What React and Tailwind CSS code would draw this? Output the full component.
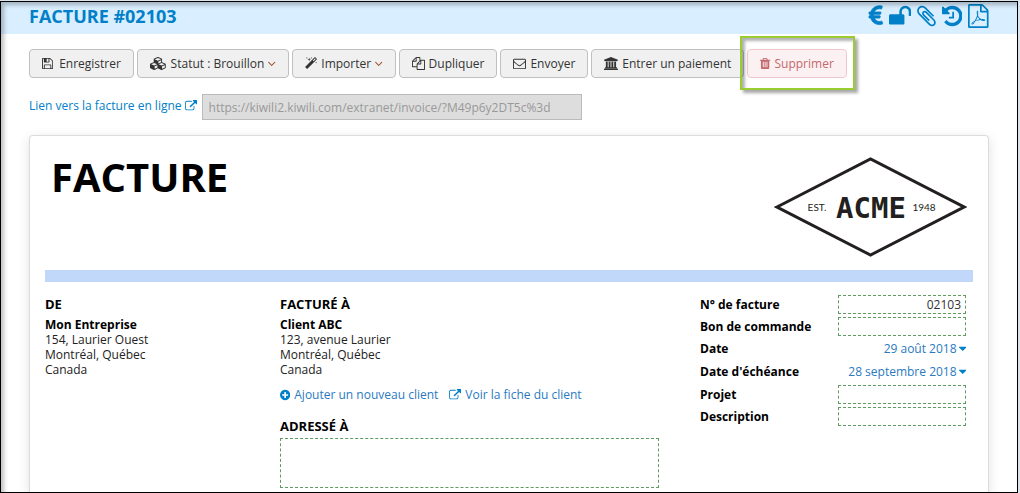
import React, { useState } from "react";

// x offset, width and path of each icon, on a 1792 high grid
const icons = {
  save: [128, 1536, "M512 1536h768v-384h-768v384zm896 0h128v-896q0-14-10-38.5t-20-34.5l-281-281q-10-10-34-20t-39-10v416q0 40-28 68t-68 28h-576q-40 0-68-28t-28-68v-416h-128v1280h128v-416q0-40 28-68t68-28h832q40 0 68 28t28 68v416zm-384-928v-320q0-13-9.5-22.5t-22.5-9.5h-192q-13 0-22.5 9.5t-9.5 22.5v320q0 13 9.5 22.5t22.5 9.5h192q13 0 22.5-9.5t9.5-22.5zm640 32v928q0 40-28 68t-68 28h-1344q-40 0-68-28t-28-68v-1344q0-40 28-68t68-28h928q40 0 88 20t76 48l280 280q28 28 48 76t20 88z"],
  cubes: [0, 2304, "M640 1632l384-192v-314l-384 164v342zm-64-454l404-173-404-173-404 173zm1088 454l384-192v-314l-384 164v342zm-64-454l404-173-404-173-404 173zm-448-293l384-165v-266l-384 164v267zm-64-379l441-189-441-189-441 189zm1088 518v416q0 36-19 67t-52 47l-448 224q-25 14-57 14t-57-14l-448-224q-5-2-7-4-2 2-7 4l-448 224q-25 14-57 14t-57-14l-448-224q-33-16-52-47t-19-67v-416q0-38 21.5-70t56.5-48l434-186v-400q0-38 21.5-70t56.5-48l448-192q23-10 50-10t50 10l448 192q35 16 56.5 48t21.5 70v400l434 186q36 16 57 48t21 70z"],
  magic: [64, 1728, "M1254 581l293-293-107-107-293 293zm447-293q0 27-18 45l-1286 1286q-18 18-45 18t-45-18l-198-198q-18-18-18-45t18-45l1286-1286q18-18 45-18t45 18l198 198q18 18 18 45zm-1351-190l98 30-98 30-30 98-30-98-98-30 98-30 30-98zm350 162l196 60-196 60-60 196-60-196-196-60 196-60 60-196zm930 478l98 30-98 30-30 98-30-98-98-30 98-30 30-98zm-640-640l98 30-98 30-30 98-30-98-98-30 98-30 30-98z"],
  copy: [0, 1792, "M1696 384q40 0 68 28t28 68v1216q0 40-28 68t-68 28h-960q-40 0-68-28t-28-68v-288h-544q-40 0-68-28t-28-68v-672q0-40 20-88t48-76l408-408q28-28 76-48t88-20h416q40 0 68 28t28 68v328q68-40 128-40h416zm-544 213l-299 299h299v-299zm-640-384l-299 299h299v-299zm196 647l316-316v-416h-384v416q0 40-28 68t-68 28h-416v640h512v-256q0-40 20-88t48-76zm956 804v-1152h-384v416q0 40-28 68t-68 28h-416v640h896z"],
  envelope: [0, 1792, "M1664 1504v-768q-32 36-69 66-268 206-426 338-51 43-83 67t-86.5 48.5-102.5 24.5h-2q-48 0-102.5-24.5t-86.5-48.5-83-67q-158-132-426-338-37-30-69-66v768q0 13 9.5 22.5t22.5 9.5h1472q13 0 22.5-9.5t9.5-22.5zm0-1051v-24.5l-.5-13-3-12.5-5.5-9-9-7.5-14-2.5h-1472q-13 0-22.5 9.5t-9.5 22.5q0 168 147 284 193 152 401 317 6 5 35 29.5t46 37.5 44.5 31.5 50.5 27.5 43 9h2q20 0 43-9t50.5-27.5 44.5-31.5 46-37.5 35-29.5q208-165 401-317 54-43 100.5-115.5t46.5-131.5zm128-37v1088q0 66-47 113t-113 47h-1472q-66 0-113-47t-47-113v-1088q0-66 47-113t113-47h1472q66 0 113 47t47 113z"],
  bank: [0, 1920, "M960 0l960 384v128h-128q0 26-20.5 45t-48.5 19h-1526q-28 0-48.5-19t-20.5-45h-128v-128zm-704 640h256v768h128v-768h256v768h128v-768h256v768h128v-768h256v768h59q28 0 48.5 19t20.5 45v64h-1664v-64q0-26 20.5-45t48.5-19h59v-768zm1595 960q28 0 48.5 19t20.5 45v128h-1920v-128q0-26 20.5-45t48.5-19h1782z"],
  trash: [192, 1408, "M704 1376v-704q0-14-9-23t-23-9h-64q-14 0-23 9t-9 23v704q0 14 9 23t23 9h64q14 0 23-9t9-23zm256 0v-704q0-14-9-23t-23-9h-64q-14 0-23 9t-9 23v704q0 14 9 23t23 9h64q14 0 23-9t9-23zm256 0v-704q0-14-9-23t-23-9h-64q-14 0-23 9t-9 23v704q0 14 9 23t23 9h64q14 0 23-9t9-23zm-544-992h448l-48-117q-7-9-17-11h-317q-10 2-17 11zm928 32v64q0 14-9 23t-23 9h-96v948q0 83-47 143.5t-113 60.5h-832q-66 0-113-58.5t-47-141.5v-952h-96q-14 0-23-9t-9-23v-64q0-14 9-23t23-9h309l70-167q15-37 54-63t79-26h320q40 0 79 26t54 63l70 167h309q14 0 23 9t9 23z"],
  external: [0, 1792, "M1408 928v320q0 119-84.5 203.5t-203.5 84.5h-832q-119 0-203.5-84.5t-84.5-203.5v-832q0-119 84.5-203.5t203.5-84.5h704q14 0 23 9t9 23v64q0 14-9 23t-23 9h-704q-66 0-113 47t-47 113v832q0 66 47 113t113 47h832q66 0 113-47t47-113v-320q0-14 9-23t23-9h64q14 0 23 9t9 23zm384-864v512q0 26-19 45t-45 19-45-19l-176-176-652 652q-10 10-23 10t-23-10l-114-114q-10-10-10-23t10-23l652-652-176-176q-19-19-19-45t19-45 45-19h512q26 0 45 19t19 45z"],
  plus: [128, 1536, "M1344 960v-128q0-26-19-45t-45-19h-256v-256q0-26-19-45t-45-19h-128q-26 0-45 19t-19 45v256h-256q-26 0-45 19t-19 45v128q0 26 19 45t45 19h256v256q0 26 19 45t45 19h128q26 0 45-19t19-45v-256h256q26 0 45-19t19-45zm320-64q0 209-103 385.5t-279.5 279.5-385.5 103-385.5-103-279.5-279.5-103-385.5 103-385.5 279.5-279.5 385.5-103 385.5 103 279.5 279.5 103 385.5z"],
  angle: [384, 1024, "M1395 736q0 13-10 23l-466 466q-10 10-23 10t-23-10l-466-466q-10-10-10-23t10-23l50-50q10-10 23-10t23 10l393 393 393-393q10-10 23-10t23 10l50 50q10 10 10 23z"],
  caret: [384, 1024, "M1408 704q0 26-19 45l-448 448q-19 19-45 19t-45-19l-448-448q-19-19-19-45t19-45 45-19h896q26 0 45 19t19 45z"],
  euro: [384, 1024, "M1360 1307l35 159q3 12-3 22.5t-17 14.5l-5 1q-4 2-10.5 3.5t-16 4.5-21.5 5.5-25.5 5-30 5-33.5 4.5-36.5 3-38.5 1q-234 0-409-130.5t-238-351.5h-95q-13 0-22.5-9.5t-9.5-22.5v-113q0-13 9.5-22.5t22.5-9.5h66q-2-57 1-105h-67q-14 0-23-9t-9-23v-114q0-14 9-23t23-9h98q67-210 243.5-338t400.5-128q102 0 194 23 11 3 20 15 6 11 3 24l-43 159q-3 13-14 19.5t-24 2.5l-4-1q-4-1-11.5-2.5l-17.5-3.5-22.5-3.5-26-3-29-2.5-29.5-1q-126 0-226 64t-150 176h468q16 0 25 12 10 12 7 26l-24 114q-5 26-32 26h-488q-3 37 0 105h459q15 0 25 12 9 12 6 27l-24 112q-2 11-11 18.5t-20 7.5h-387q48 117 149.5 185.5t228.5 68.5q18 0 36-1.5t33.5-3.5 29.5-4.5 24.5-5 18.5-4.5l12-3 5-2q13-5 26 2 12 7 15 21z"],
  unlock: [64, 1664, "M1728 576v256q0 26-19 45t-45 19h-64q-26 0-45-19t-19-45v-256q0-106-75-181t-181-75-181 75-75 181v192h96q40 0 68 28t28 68v576q0 40-28 68t-68 28h-960q-40 0-68-28t-28-68v-576q0-40 28-68t68-28h672v-192q0-185 131.5-316.5t316.5-131.5 316.5 131.5 131.5 316.5z"],
  clip: [192, 1408, "M1596 1385q0 117-79 196t-196 79q-135 0-235-100l-777-776q-113-115-113-271 0-159 110-270t269-111q158 0 273 113l605 606q10 10 10 22 0 16-30.5 46.5t-46.5 30.5q-13 0-23-10l-606-607q-79-77-181-77-106 0-179 75t-73 181q0 105 76 181l776 777q63 63 145 63 64 0 106-42t42-106q0-82-63-145l-581-581q-26-24-60-24-29 0-48 19t-19 48q0 32 25 59l410 410q10 10 10 22 0 16-31 47t-47 31q-12 0-22-10l-410-410q-63-61-63-149 0-82 57-139t139-57q88 0 149 63l581 581q100 98 100 235z"],
  history: [128, 1536, "M1664 896q0 156-61 298t-164 245-245 164-298 61q-172 0-327-72.5t-264-204.5q-7-10-6.5-22.5t8.5-20.5l137-138q10-9 25-9 16 2 23 12 73 95 179 147t225 52q104 0 198.5-40.5t163.5-109.5 109.5-163.5 40.5-198.5-40.5-198.5-109.5-163.5-163.5-109.5-198.5-40.5q-98 0-188 35.5t-160 101.5l137 138q31 30 14 69-17 40-59 40h-448q-26 0-45-19t-19-45v-448q0-42 40-59 39-17 69 14l130 129q107-101 244.5-156.5t284.5-55.5q156 0 298 61t245 164 164 245 61 298zm-640-288v448q0 14-9 23t-23 9h-320q-14 0-23-9t-9-23v-64q0-14 9-23t23-9h224v-352q0-14 9-23t23-9h64q14 0 23 9t9 23z"],
  pdf: [128, 1536, "M1596 380q28 28 48 76t20 88v1152q0 40-28 68t-68 28h-1344q-40 0-68-28t-28-68v-1600q0-40 28-68t68-28h896q40 0 88 20t76 48zm-444-244v376h376q-10-29-22-41l-313-313q-12-12-41-22zm384 1528v-1024h-416q-40 0-68-28t-28-68v-416h-768v1536h1280zm-514-593q33 26 84 56 59-7 117-7 147 0 177 49 16 22 2 52 0 1-1 2l-2 2v1q-6 38-71 38-48 0-115-20t-130-53q-221 24-392 83-153 262-242 262-15 0-28-7l-24-12q-1-1-6-5-10-10-6-36 9-40 56-91.5t132-96.5q14-9 23 6 2 2 2 4 52-85 107-197 68-136 104-262-24-82-30.5-159.5t6.5-127.5q11-40 42-40h22q23 0 35 15 18 21 9 68-2 6-4 8 1 3 1 8v30q-2 123-14 192 55 164 146 238zm-576 411q52-24 137-158-51 40-87.5 84t-49.5 74zm398-920q-15 42-2 132 1-7 7-44 0-3 7-43 1-4 4-8-1-1-1-2t-1-2q-1-22-13-36 0 1-1 2v2zm-124 661q135-54 284-81-2-1-13-9.5t-16-13.5q-76-67-127-176-27 86-83 197-30 56-45 83zm646-16q-24-24-140-24 76 28 124 28 14 0 18-1 0-1-2-3z"],
};

const Icon = ({ name, className = "h-3" }) => {
  const [x, width, path] = icons[name];
  return (
    <svg className={`w-auto shrink-0 ${className}`} viewBox={`${x} 0 ${width} 1792`} fill="currentColor" aria-hidden="true">
      <path d={path} />
    </svg>
  );
};

const actions = [
  { icon: "save", label: "Enregistrer", gap: "gap-[6px]" },
  { icon: "cubes", label: "Statut : Brouillon", gap: "gap-1", menu: true },
  { icon: "magic", label: "Importer", gap: "gap-1", menu: true },
  { icon: "copy", label: "Dupliquer", gap: "gap-1" },
  { icon: "envelope", label: "Envoyer", gap: "gap-1" },
  { icon: "bank", label: "Entrer un paiement", gap: "gap-1" },
];

const tools = [
  { icon: "euro", label: "Devise", size: "h-6 overflow-visible stroke-current stroke-[60]" },
  { icon: "unlock", label: "Verrouiller", size: "h-6" },
  { icon: "clip", label: "Pièces jointes", size: "h-6" },
  { icon: "history", label: "Historique", size: "h-6" },
  { icon: "pdf", label: "PDF", size: "h-6" },
];

const Header = () => (
  <header className="flex h-8 items-center justify-between bg-[#d9eeff] px-7 pb-1 text-[#0080c8]">
    <h1 className="text-lg font-bold">FACTURE #02103</h1>
    <div className="flex items-center gap-[6px]">
      {tools.map((tool) => (
        <button key={tool.icon} type="button" aria-label={tool.label}>
          <Icon name={tool.icon} className={tool.size} />
        </button>
      ))}
    </div>
  </header>
);

const Toolbar = () => (
  <div className="flex gap-[3px]">
    {actions.map((action) => (
      <button
        key={action.label}
        type="button"
        className={`flex h-[29px] items-center rounded border border-[#c0c0c0] bg-[#f0f0f0] px-3 whitespace-nowrap text-[#333] ${action.gap}`}
      >
        <Icon name={action.icon} className="h-[13px]" />
        {action.label}
        {action.menu && <Icon name="angle" className="h-[13px] text-[#a0522d]" />}
      </button>
    ))}
    <div className="relative">
      <button
        type="button"
        className="flex h-[29px] items-center gap-1 rounded border border-[#f0c8cc] bg-[#fbf1f2] px-3 text-[#c4686e]"
      >
        <Icon name="trash" className="h-[13px]" />
        Supprimer
      </button>
      <div className="pointer-events-none absolute -top-[13px] -right-2 -bottom-3 -left-[7px] border-2 border-[#9acd32] shadow-[3px_3px_3px_rgba(0,0,0,0.35),inset_3px_3px_3px_rgba(0,0,0,0.3)]" />
    </div>
  </div>
);

const Logo = () => (
  <svg className="h-[100px] w-[193px]" viewBox="0 0 193 100" role="img" aria-label="ACME, Est. 1948">
    <path d="M3 50L96.500 2L190 50L96.500 98Z" fill="none" stroke="#231f20" strokeWidth="3" />
    <g fill="#231f20" textAnchor="middle" className="font-['Lato',sans-serif]">
      <text x="43" y="54" fontSize="10">EST.</text>
      <text x="97" y="61" fontSize="29" fontWeight="700" className="font-['DejaVu_Sans_Mono',monospace]">ACME</text>
      <text x="150" y="54" fontSize="10">1948</text>
    </g>
  </svg>
);

const Address = ({ title, name, street }) => (
  <div className="text-black">
    <h3 className="text-[13px] leading-5 font-bold">{title}</h3>
    <address className="text-xs leading-[15px] text-[#222] not-italic">
      <strong className="block pt-[3px] text-black">{name}</strong>
      {street}
      <br />
      Montréal, Québec
      <br />
      Canada
    </address>
  </div>
);

const TextRow = ({ id, label, value = "" }) => (
  <div className="flex h-[22px] items-start justify-between">
    <label htmlFor={id} className="font-bold text-black">{label}</label>
    <input
      id={id}
      type="text"
      defaultValue={value}
      className="h-[19px] w-32 border border-dashed border-[#5f9a62] bg-white px-1 text-right text-[#333]"
    />
  </div>
);

const DateRow = ({ label, value }) => (
  <div className="flex h-[23px] items-start justify-between">
    <span className="font-bold text-black">{label}</span>
    <button type="button" className="flex items-center gap-[2px] text-[#2a7abf]">
      {value}
      <Icon name="caret" className="h-[13px] text-[#0080c8]" />
    </button>
  </div>
);

const Invoice = () => {
  const [recipient, setRecipient] = useState("");

  return (
    <main className="mx-7 mt-[15px] flex-1 rounded-t border border-b-0 border-[#dcdcdc] bg-white px-[15px] shadow-[0_3px_12px_rgba(0,0,0,0.12)]">
      <div className="flex items-start justify-between px-[6px] pt-[21px]">
        <h2 className="text-[40px] leading-10 font-bold text-black">FACTURE</h2>
        <Logo />
      </div>
      <div className="mt-[13px] h-3 bg-[#c2d8fa]" />

      <div className="mt-3 grid grid-cols-[235px_1fr_266px] pr-[7px]">
        <Address title="DE" name="Mon Entreprise" street="154, Laurier Ouest" />
        <div className="pr-[41px]">
          <Address title="FACTURÉ À" name="Client ABC" street="123, avenue Laurier" />
          <div className="mt-[9px] flex h-[18px] items-center gap-[11px] text-[#2a7abf]">
            <a href="#nouveau" className="flex items-center gap-1">
              <Icon name="plus" className="h-3 text-[#0080c8]" />
              Ajouter un nouveau client
            </a>
            <a href="#fiche" className="flex items-center gap-1">
              <Icon name="external" className="h-3 text-[#0080c8]" />
              Voir la fiche du client
            </a>
          </div>
          <label htmlFor="recipient" className="mt-3 block text-[13px] leading-5 font-bold text-black">
            ADRESSÉ À
          </label>
          <textarea
            id="recipient"
            value={recipient}
            onChange={(e) => setRecipient(e.target.value)}
            className="mt-[2px] block h-[50px] w-full resize-none border border-dashed border-[#5f9a62] bg-white"
          />
        </div>
        <div className="pt-px leading-[19px]">
          <TextRow id="number" label="N° de facture" value="02103" />
          <TextRow id="order" label="Bon de commande" />
          <DateRow label="Date" value="29 août 2018" />
          <DateRow label="Date d'échéance" value="28 septembre 2018" />
          <TextRow id="project" label="Projet" />
          <TextRow id="description" label="Description" />
        </div>
      </div>
    </main>
  );
};

const App = () => {
  return (
    <div className="flex min-h-screen flex-col bg-[#d9e4ec] pt-px pr-[2px] font-['Open_Sans',sans-serif] text-xs">
      <div className="relative flex flex-1 flex-col overflow-hidden border border-black bg-white">
        <Header />
        <div className="px-7 pt-[15px]">
          <Toolbar />
          <div className="mt-4 flex items-start gap-[5px]">
            <a href="#facture" className="flex h-[23px] items-center gap-[3px] text-[#0080c8]">
              Lien vers la facture en ligne
              <Icon name="external" />
            </a>
            <input
              type="text"
              readOnly
              aria-label="Lien vers la facture"
              value="https://kiwili2.kiwili.com/extranet/invoice/?M49p6y2DT5c%3d"
              className="h-[26px] w-[380px] border border-[#bbb] bg-[#ddd] px-[6px] text-[#999]"
            />
          </div>
        </div>
        <Invoice />
        <div className="pointer-events-none absolute inset-0 shadow-[inset_3px_3px_4px_rgba(0,0,0,0.25)]" />
      </div>
    </div>
  );
};

export default App;
